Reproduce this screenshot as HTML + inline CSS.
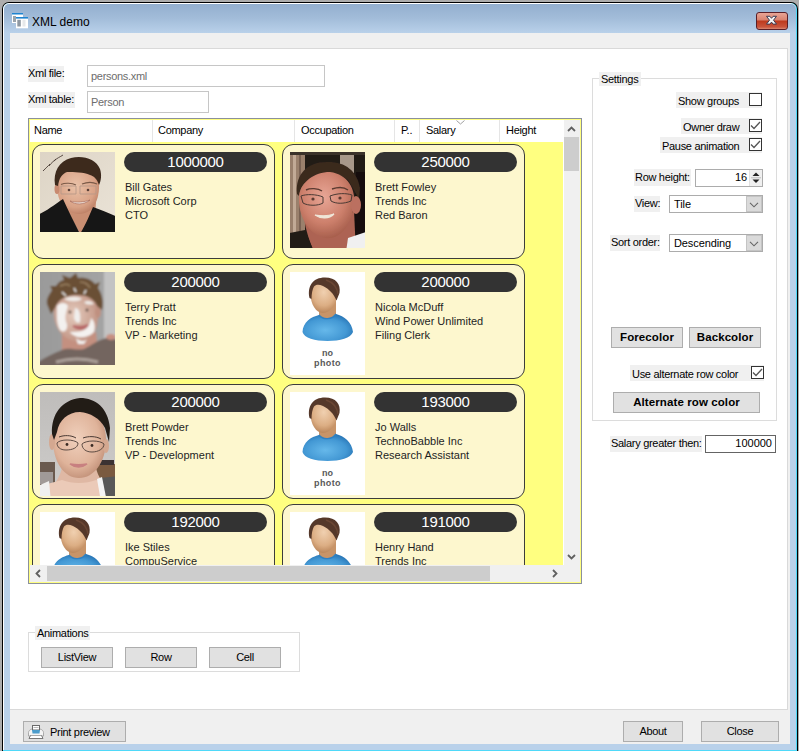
<!DOCTYPE html>
<html><head><meta charset="utf-8">
<style>
*{box-sizing:border-box}
body{margin:0;width:799px;height:751px;overflow:hidden;background:#adadad;position:relative;font-family:"Liberation Sans",sans-serif;font-size:11px;color:#000}
.a{position:absolute}
svg.a{display:block}
.t{position:absolute;white-space:nowrap;font-size:11px;line-height:13px;letter-spacing:-0.3px}
.lb{position:absolute;background:#f0f0f0}
.btn{position:absolute;background:#e1e1e1;border:1px solid #adadad;text-align:center;font-size:11px;line-height:19px;letter-spacing:-0.3px}
.bb{font-weight:bold;letter-spacing:0.1px;font-size:11.5px}
.chk{position:absolute;width:13px;height:13px;border:1px solid #333;background:#fff}
.card{position:absolute;width:243px;height:115px;border:1px solid #3c3c3c;border-radius:11px;background:#fdf7ce}
.pill{position:absolute;left:91px;top:7px;width:143px;height:20px;border-radius:10px;background:#333;color:#fff;text-align:center;font-size:15px;line-height:20px;letter-spacing:-0.3px}
.ct{position:absolute;left:92px;top:35px;font-size:11px;line-height:14px;color:#1e1e1e;white-space:nowrap}
.ph{position:absolute;left:7px;top:7px;width:75px;overflow:hidden}
.gb{position:absolute;border:1px solid #dcdcdc}
</style></head><body>
<div class="a" style="left:2px;top:2px;width:796px;height:760px;background:#000;border-radius:7px 7px 0 0"></div>
<div class="a" style="left:3px;top:3px;width:794px;height:760px;background:#4fd9f9;border-radius:6px 6px 0 0"></div>
<div class="a" style="left:3px;top:3px;width:793px;height:747px;background:#fff;border-radius:6px 6px 0 0"></div>
<div class="a" style="left:4px;top:4px;width:792px;height:746px;background:linear-gradient(#93afcf 0px,#a2bcd9 14px,#b9d1ea 29px,#b9d1ea 100%);border-radius:5px 5px 0 0"></div>
<svg class="a" style="left:12px;top:12px" width="17" height="17" viewBox="0 0 17 17">
 <rect x="0" y="1" width="11" height="10" fill="#fff"/>
 <rect x="0" y="1" width="11" height="1.5" fill="#1f84d0"/>
 <rect x="1" y="4" width="3" height="6" fill="#9ba4ac"/>
 <rect x="4" y="5" width="12" height="11.3" fill="#fff"/>
 <rect x="4" y="5" width="12" height="1.6" fill="#1f84d0"/>
 <rect x="5.3" y="7.8" width="3.5" height="6.7" fill="#8e98a2"/>
 <rect x="10.5" y="7.8" width="3" height="6.7" fill="#e6e8ea"/>
</svg>
<div class="t" style="left:32px;top:15px;font-size:12px;line-height:14px;letter-spacing:0;color:#000">XML demo</div>
<div class="a" style="left:756px;top:12px;width:32px;height:18px;border:1px solid #5a1f27;border-radius:3px;background:linear-gradient(#e9a596 0px,#d9836f 7px,#bd3a1e 8px,#c9553c 14px,#d98a75 100%)"></div>
<svg class="a" style="left:764px;top:14px" width="16" height="14" viewBox="0 0 16 14">
 <path d="M2.5 2.3 L5.9 2.3 L7.5 4.3 L9.1 2.3 L12.5 2.3 L9.5 6.2 L12.5 10.1 L9.1 10.1 L7.5 8.1 L5.9 10.1 L2.5 10.1 L5.5 6.2 Z" fill="#f6f6f6" stroke="#3a3a50" stroke-width="1" stroke-linejoin="round"/>
</svg>
<div class="a" style="left:10px;top:33px;width:780px;height:711px;background:#f0f0f0"></div>
<div class="a" style="left:10px;top:48px;width:778px;height:662px;background:#d9d9d9"></div>
<div class="a" style="left:10px;top:49px;width:777px;height:660px;background:#fff"></div>
<div class="lb" style="left:28px;top:66px;width:36px;height:16px"></div>
<div class="t" style="left:28px;top:67px">Xml file:</div>
<div class="lb" style="left:28px;top:92px;width:47px;height:16px"></div>
<div class="t" style="left:28px;top:93px">Xml table:</div>
<div class="a" style="left:87px;top:65px;width:238px;height:22px;border:1px solid #c6c6c6;background:#fff"></div>
<div class="t" style="left:91px;top:70px;color:#6d6d6d">persons.xml</div>
<div class="a" style="left:87px;top:91px;width:122px;height:22px;border:1px solid #c6c6c6;background:#fff"></div>
<div class="t" style="left:91px;top:96px;color:#6d6d6d">Person</div>
<div class="a" style="left:28px;top:118px;width:554px;height:466px;border:1px solid #8b909c;background:#ffff80;overflow:hidden">
<div class="a" style="left:1px;top:1px;width:534px;height:22px;background:#fff"></div>
<div class="a" style="left:123px;top:1px;width:1px;height:22px;background:#e5e5e5"></div>
<div class="a" style="left:265px;top:1px;width:1px;height:22px;background:#e5e5e5"></div>
<div class="a" style="left:365px;top:1px;width:1px;height:22px;background:#e5e5e5"></div>
<div class="a" style="left:390px;top:1px;width:1px;height:22px;background:#e5e5e5"></div>
<div class="a" style="left:470px;top:1px;width:1px;height:22px;background:#e5e5e5"></div>
<div class="t" style="left:5px;top:5px">Name</div>
<div class="t" style="left:129px;top:5px">Company</div>
<div class="t" style="left:272px;top:5px">Occupation</div>
<div class="t" style="left:372px;top:5px">P..</div>
<div class="t" style="left:397px;top:5px">Salary</div>
<div class="t" style="left:477px;top:5px">Height</div>
<svg class="a" style="left:427px;top:1px" width="9" height="5"><path d="M0.5 0.5 L4.5 4 L8.5 0.5" fill="none" stroke="#a0a0a0" stroke-width="1"/></svg>
<div class="a" style="left:1px;top:23px;width:533px;height:423px;overflow:hidden">
<div class="card" style="left:2px;top:2px"><svg class="a" style="left:7px;top:7px" width="75" height="80" viewBox="0 0 75 80"><defs><filter id="fb" x="-10%" y="-10%" width="120%" height="120%"><feGaussianBlur stdDeviation="0.6"/></filter><clipPath id="fbc"><rect width="75" height="80"/></clipPath></defs><g clip-path="url(#fbc)"><g filter="url(#fb)">
<defs>
<linearGradient id="bbg" x1="0" y1="0" x2="1" y2="1"><stop offset="0" stop-color="#dcd3c4"/><stop offset="1" stop-color="#ebe4d8"/></linearGradient>
<radialGradient id="bsk" cx="0.45" cy="0.4" r="0.65"><stop offset="0" stop-color="#eac2a8"/><stop offset="0.7" stop-color="#d9a286"/><stop offset="1" stop-color="#b87a60"/></radialGradient>
</defs>
<rect x="-5" y="-5" width="85" height="90" fill="url(#bbg)"/>
<path d="M20 44 L40 82 L54 82 L56 50 Z" fill="#c98e72"/>
<path d="M17 30 C16 48 24 61 39 62 C53 62 60 48 59 30 C58 20 50 15 38 15 C26 15 18 20 17 30 Z" fill="url(#bsk)"/>
<ellipse cx="17" cy="37" rx="2.5" ry="5" fill="#c88a70"/>
<path d="M15 33 C13 20 19 9 31 6 C43 3 56 7 60 17 C62 23 61 29 59 33 C57 27 54 24 50 23 C44 20 34 20 27 20 C22 22 19 26 18 34 Z" fill="#3d2b1f"/>
<path d="M21 32.5 C25 30.5 32 31 36 33 M42 32 C47 30 53 30 57 32" stroke="#7a5a48" stroke-width="1.1" fill="none"/>
<path d="M21 34 h15 v8 h-15z M40 34 h16 v8 h-16z" fill="none" stroke="#b89888" stroke-width="0.9"/>
<circle cx="29" cy="38" r="1.3" fill="#5a4038"/><circle cx="48" cy="38" r="1.3" fill="#5a4038"/>
<path d="M30 49 C35 53 44 53 50 48 C45 50 36 51 30 49 Z" fill="#f4e8e0" stroke="#a06050" stroke-width="0.6"/>
<path d="M-5 64 C4 61 14 53 23 47 C28 58 34 70 40 82 L-5 85 Z" fill="#161413"/>
<path d="M40 82 C46 72 50 62 53 55 C62 58 70 62 80 66 L80 85 L40 85 Z" fill="#161413"/>
<path d="M3 19 C6 16 8 14 10 12 M9 14 C12 10 14 9 16 7 M14 9 C17 6 20 5 23 3" stroke="#4a3c34" stroke-width="0.9" fill="none"/>
</g></g></svg><div class="pill">1000000</div><div class="ct">Bill Gates<br>Microsoft Corp<br>CTO</div></div>
<div class="card" style="left:252px;top:2px"><svg class="a" style="left:7px;top:7px" width="75" height="96" viewBox="0 0 75 96"><defs><filter id="ff" x="-10%" y="-10%" width="120%" height="120%"><feGaussianBlur stdDeviation="0.7"/></filter><clipPath id="ffc"><rect width="75" height="96"/></clipPath></defs><g clip-path="url(#ffc)"><g filter="url(#ff)">
<defs>
<radialGradient id="fsk" cx="0.45" cy="0.38" r="0.65"><stop offset="0" stop-color="#e8a696"/><stop offset="0.6" stop-color="#cd806c"/><stop offset="1" stop-color="#a45c4a"/></radialGradient>
</defs>
<rect x="-5" y="-5" width="85" height="106" fill="#241c17"/>
<rect x="-5" y="-5" width="20" height="106" fill="#9a806c"/>
<rect x="3" y="-5" width="3" height="106" fill="#c2aa96"/>
<rect x="9" y="-5" width="2" height="106" fill="#7a6252"/>
<rect x="-5" y="-5" width="85" height="8" fill="#3a322a"/>
<rect x="50" y="3" width="14" height="18" fill="#a8988a"/>
<path d="M66 20 L80 20 L80 100 L64 100 Z" fill="#14100d"/>
<path d="M14 66 L64 60 L66 100 L24 100 C20 90 16 80 14 66 Z" fill="#ad6452"/>
<path d="M7 42 C5 22 18 10 36 10 C54 9 67 18 70 36 L69 48 C65 40 62 34 58 28 C48 20 28 20 16 30 C13 33 10 36 9 44 Z" fill="#3a291f"/>
<path d="M9 44 C8 64 18 82 35 86 C51 88 62 72 64 52 C66 38 58 22 40 20 C24 20 11 30 9 44 Z" fill="url(#fsk)"/>
<ellipse cx="66" cy="53" rx="5" ry="9" fill="#bb7060"/>
<path d="M16 38 C20 36 28 36 32 39 M42 37 C48 35 54 35 58 38" stroke="#5a3a30" stroke-width="1.4" fill="none"/>
<path d="M11 44 C16 42 26 42 33 45 L33 51 C28 54 18 54 13 51 Z M40 44 C48 41 56 41 62 43 L61 49 C54 52 46 52 41 49 Z" fill="none" stroke="#4a3a34" stroke-width="1"/>
<circle cx="23" cy="47" r="1.6" fill="#5a3a32"/><circle cx="50" cy="46" r="1.6" fill="#5a3a32"/>
<path d="M25 63 C31 67 39 67 44 62 C39 64 31 64 25 63 Z" fill="#efe6d8" stroke="#efe6d8" stroke-width="1.2"/>
<path d="M58 86 C64 84 70 82 76 80 L76 100 L56 100 Z" fill="#f0f0f0"/>
<path d="M-5 100 L-5 82 L15 78 C18 86 21 92 24 100 Z" fill="#241c17"/>
</g></g></svg><div class="pill">250000</div><div class="ct">Brett Fowley<br>Trends Inc<br>Red Baron</div></div>
<div class="card" style="left:2px;top:122px"><svg class="a" style="left:7px;top:7px" width="75" height="93" viewBox="0 0 75 93"><defs><filter id="ft" x="-10%" y="-10%" width="120%" height="120%"><feGaussianBlur stdDeviation="0.85"/></filter><clipPath id="ftc"><rect width="75" height="93"/></clipPath></defs><g clip-path="url(#ftc)"><g filter="url(#ft)">
<defs>
<radialGradient id="tsk" cx="0.45" cy="0.45" r="0.6"><stop offset="0" stop-color="#e4cabc"/><stop offset="1" stop-color="#c09282"/></radialGradient>
<linearGradient id="tbg" x1="0" y1="0" x2="1" y2="0"><stop offset="0" stop-color="#999999"/><stop offset="1" stop-color="#a6a6a6"/></linearGradient>
</defs>
<rect x="-5" y="-5" width="85" height="103" fill="url(#tbg)"/>
<rect x="64" y="-5" width="16" height="72" fill="#c3c3c3"/>
<path d="M22 62 L56 60 L58 80 L22 82 Z" fill="#c49080"/>
<path d="M14 38 C13 56 24 70 40 70 C54 69 59 54 58 38 C57 26 48 20 36 20 C24 21 15 28 14 38 Z" fill="url(#tsk)"/>
<ellipse cx="58" cy="40" rx="3" ry="6" fill="#c09080"/>
<path d="M7 32 C6 26 10 22 12 18 L10 14 L16 14 C18 10 22 8 24 8 L22 3 L30 6 L36 1 L38 6 C46 5 52 8 55 12 L60 10 L58 16 C62 22 64 30 62 38 L57 34 C54 26 46 23 36 23 C26 23 18 28 15 36 L11 42 Z" fill="#6a5036"/>
<path d="M20 14 C24 12 28 12 30 14 M40 10 C44 10 48 12 50 16" stroke="#9a8060" stroke-width="1.5" fill="none"/>
<path d="M22 20 L26 24 M34 16 L36 20 M46 18 L44 22" stroke="#f0f0f0" stroke-width="1.5"/>
<path d="M17 34 C20 30 26 30 28 34 C26 40 24 46 27 52 C28 58 24 62 20 58 C16 52 17 42 17 34 Z" fill="#f3f1ef"/>
<path d="M24 27 C30 24 38 24 42 27 C38 30 30 30 24 27 Z" fill="#efece8"/>
<path d="M44 30 C48 28 52 29 54 32 C50 33 46 33 44 30 Z" fill="#efece8"/>
<path d="M35 36 C39 36 41 42 40 50 C38 52 35 50 34 46 Z" fill="#f0eeec"/>
<path d="M30 60 C34 66 46 68 54 60 C56 54 54 48 51 46 C50 52 48 56 44 58 C40 60 34 60 30 60 Z" fill="#f4f2f0"/>
<path d="M36 66 C40 70 46 70 48 66 L44 72 L38 72 Z" fill="#f2f0ee"/>
<circle cx="30" cy="40" r="1.5" fill="#5a4a42"/><circle cx="47" cy="38" r="1.5" fill="#5a4a42"/>
<path d="M33 54 C38 58 44 58 48 53 C44 55 38 55 33 54 Z" fill="#a85858" stroke="#b86868" stroke-width="2"/>
<path d="M-5 98 L-5 92 C4 86 12 82 22 78 C30 75 36 79 44 77 C52 73 58 68 66 66 C72 66 78 68 80 70 L80 98 Z" fill="#73655e"/>
<path d="M16 90 C30 86 44 86 58 90" stroke="#aca09a" stroke-width="3" fill="none"/>
<ellipse cx="71" cy="65" rx="5" ry="3" fill="#c89080"/>
</g></g></svg><div class="pill">200000</div><div class="ct">Terry Pratt<br>Trends Inc<br>VP - Marketing</div></div>
<div class="card" style="left:252px;top:122px"><svg class="a" style="left:7px;top:7px" width="75" height="103" viewBox="0 0 75 103"><rect width="75" height="103" fill="#fff"/>
<defs>
<radialGradient id="sh1" cx="0.45" cy="0.6" r="0.6"><stop offset="0" stop-color="#66b8ea"/><stop offset="0.7" stop-color="#4398d4"/><stop offset="1" stop-color="#2a78b8"/></radialGradient>
<radialGradient id="fa1" cx="0.5" cy="0.35" r="0.7"><stop offset="0" stop-color="#f0d0b0"/><stop offset="0.6" stop-color="#dcae84"/><stop offset="1" stop-color="#b47e52"/></radialGradient>
</defs>
<path d="M29 35 L46 28 L46 48 L29 48 Z" fill="#c89468"/>
<path d="M12.5 60 C13 50 21 45 29 43 C33 48 42 48 46 42 C54 44 62 50 63 60 C61 66 50 69 37.5 69 C25 69 14 66 12.5 60 Z" fill="url(#sh1)"/>
<path d="M29 43 C33 48 42 48 46 42" stroke="#2e80c2" stroke-width="1.4" fill="none"/>
<path d="M20.5 22 C20.5 32 26 41 33 41 C40 41 47 32 47 22 C47 14 42 9 34 9 C26 9 20.5 14 20.5 22 Z" fill="url(#fa1)"/>
<path d="M19.5 26 C17 14 23 5.5 35 5.5 C46 5.5 51 12 49.5 21 L46.5 28.5 C44 22 39 17 33 14 C29 12.3 26 12.3 24 14.5 C22.5 17 21.5 22 21.5 27 Z" fill="#55382a"/>
<path d="M36 8 C42 10 47 15 48 22" stroke="#6a4634" stroke-width="1.5" fill="none"/>
<text x="37.5" y="84" text-anchor="middle" font-family="Liberation Sans" font-weight="bold" font-size="9" fill="#595959">no</text>
<text x="37.5" y="94" text-anchor="middle" font-family="Liberation Sans" font-weight="bold" font-size="9" fill="#595959" letter-spacing="0.4">photo</text>
</svg><div class="pill">200000</div><div class="ct">Nicola McDuff<br>Wind Power Unlimited<br>Filing Clerk</div></div>
<div class="card" style="left:2px;top:242px"><svg class="a" style="left:7px;top:7px" width="75" height="104" viewBox="0 0 75 104"><defs><filter id="fp" x="-10%" y="-10%" width="120%" height="120%"><feGaussianBlur stdDeviation="0.6"/></filter><clipPath id="fpc"><rect width="75" height="104"/></clipPath></defs><g clip-path="url(#fpc)"><g filter="url(#fp)">
<defs>
<radialGradient id="psk" cx="0.45" cy="0.42" r="0.6"><stop offset="0" stop-color="#f0d0bc"/><stop offset="0.7" stop-color="#dfb39a"/><stop offset="1" stop-color="#c3927a"/></radialGradient>
<linearGradient id="pbg" x1="0" y1="0" x2="0" y2="1"><stop offset="0" stop-color="#bebcba"/><stop offset="1" stop-color="#cfcdcb"/></linearGradient>
</defs>
<rect x="-5" y="-5" width="85" height="115" fill="url(#pbg)"/>
<rect x="-5" y="70" width="20" height="24" fill="#6a5a50"/>
<rect x="-5" y="80" width="18" height="12" fill="#a09a98"/>
<rect x="52" y="72" width="28" height="18" fill="#7a5a40"/>
<rect x="56" y="68" width="18" height="5" fill="#3a3230"/>
<path d="M22 76 L56 76 C58 84 62 90 66 94 L12 96 C16 90 20 84 22 76 Z" fill="#dfb8a4"/>
<path d="M-5 110 L-5 96 C6 92 14 90 22 88 C32 92 46 92 56 88 C62 90 68 94 72 94 L72 110 Z" fill="#ebcab8"/>
<path d="M0 93 L9 89 L11 110 L0 110 Z" fill="#f0f0f0"/>
<path d="M60 86 L80 84 L80 110 L64 110 Z" fill="#585858"/>
<path d="M57 87 L62 85 L67 110 L61 110 Z" fill="#f4f4f4"/>
<path d="M13 48 C13 70 24 86 39 86 C54 86 66 70 66 48 C66 30 56 18 40 18 C24 18 13 30 13 48 Z" fill="url(#psk)"/>
<ellipse cx="12" cy="50" rx="3" ry="8" fill="#d4a890"/>
<ellipse cx="66" cy="54" rx="3" ry="7" fill="#d4a890"/>
<path d="M12 42 C11 22 22 8 40 6 C56 6 68 16 70 36 L69 50 L65 36 C60 26 50 21 40 20 C28 20 19 28 17 40 L14 48 Z" fill="#241c19"/>
<path d="M19 45 C24 43 31 43 36 46 M43 46 C48 44 56 44 61 47" stroke="#4a3a34" stroke-width="1" fill="none"/>
<path d="M17 51 C20 47 34 47 38 51 C38 56 32 58 26 58 C20 58 17 55 17 51 Z M42 52 C46 48 60 48 64 52 C64 57 58 60 52 60 C46 60 42 57 42 52 Z" fill="none" stroke="#4e3e38" stroke-width="0.9"/>
<circle cx="27" cy="52.5" r="1.4" fill="#3a2a24"/><circle cx="52" cy="53.5" r="1.4" fill="#3a2a24"/>
<path d="M30 72 C35 76 42 76 47 72 C42 73 35 73 30 72 Z" fill="#c88080" stroke="#c88080" stroke-width="1.6"/>
</g></g></svg><div class="pill">200000</div><div class="ct">Brett Powder<br>Trends Inc<br>VP - Development</div></div>
<div class="card" style="left:252px;top:242px"><svg class="a" style="left:7px;top:7px" width="75" height="103" viewBox="0 0 75 103"><rect width="75" height="103" fill="#fff"/>
<defs>
<radialGradient id="sh2" cx="0.45" cy="0.6" r="0.6"><stop offset="0" stop-color="#66b8ea"/><stop offset="0.7" stop-color="#4398d4"/><stop offset="1" stop-color="#2a78b8"/></radialGradient>
<radialGradient id="fa2" cx="0.5" cy="0.35" r="0.7"><stop offset="0" stop-color="#f0d0b0"/><stop offset="0.6" stop-color="#dcae84"/><stop offset="1" stop-color="#b47e52"/></radialGradient>
</defs>
<path d="M29 35 L46 28 L46 48 L29 48 Z" fill="#c89468"/>
<path d="M12.5 60 C13 50 21 45 29 43 C33 48 42 48 46 42 C54 44 62 50 63 60 C61 66 50 69 37.5 69 C25 69 14 66 12.5 60 Z" fill="url(#sh2)"/>
<path d="M29 43 C33 48 42 48 46 42" stroke="#2e80c2" stroke-width="1.4" fill="none"/>
<path d="M20.5 22 C20.5 32 26 41 33 41 C40 41 47 32 47 22 C47 14 42 9 34 9 C26 9 20.5 14 20.5 22 Z" fill="url(#fa2)"/>
<path d="M19.5 26 C17 14 23 5.5 35 5.5 C46 5.5 51 12 49.5 21 L46.5 28.5 C44 22 39 17 33 14 C29 12.3 26 12.3 24 14.5 C22.5 17 21.5 22 21.5 27 Z" fill="#55382a"/>
<path d="M36 8 C42 10 47 15 48 22" stroke="#6a4634" stroke-width="1.5" fill="none"/>
<text x="37.5" y="84" text-anchor="middle" font-family="Liberation Sans" font-weight="bold" font-size="9" fill="#595959">no</text>
<text x="37.5" y="94" text-anchor="middle" font-family="Liberation Sans" font-weight="bold" font-size="9" fill="#595959" letter-spacing="0.4">photo</text>
</svg><div class="pill">193000</div><div class="ct">Jo Walls<br>TechnoBabble Inc<br>Research Assistant</div></div>
<div class="card" style="left:2px;top:362px"><svg class="a" style="left:7px;top:7px" width="75" height="103" viewBox="0 0 75 103"><rect width="75" height="103" fill="#fff"/>
<defs>
<radialGradient id="sh3" cx="0.45" cy="0.6" r="0.6"><stop offset="0" stop-color="#66b8ea"/><stop offset="0.7" stop-color="#4398d4"/><stop offset="1" stop-color="#2a78b8"/></radialGradient>
<radialGradient id="fa3" cx="0.5" cy="0.35" r="0.7"><stop offset="0" stop-color="#f0d0b0"/><stop offset="0.6" stop-color="#dcae84"/><stop offset="1" stop-color="#b47e52"/></radialGradient>
</defs>
<path d="M29 35 L46 28 L46 48 L29 48 Z" fill="#c89468"/>
<path d="M12.5 60 C13 50 21 45 29 43 C33 48 42 48 46 42 C54 44 62 50 63 60 C61 66 50 69 37.5 69 C25 69 14 66 12.5 60 Z" fill="url(#sh3)"/>
<path d="M29 43 C33 48 42 48 46 42" stroke="#2e80c2" stroke-width="1.4" fill="none"/>
<path d="M20.5 22 C20.5 32 26 41 33 41 C40 41 47 32 47 22 C47 14 42 9 34 9 C26 9 20.5 14 20.5 22 Z" fill="url(#fa3)"/>
<path d="M19.5 26 C17 14 23 5.5 35 5.5 C46 5.5 51 12 49.5 21 L46.5 28.5 C44 22 39 17 33 14 C29 12.3 26 12.3 24 14.5 C22.5 17 21.5 22 21.5 27 Z" fill="#55382a"/>
<path d="M36 8 C42 10 47 15 48 22" stroke="#6a4634" stroke-width="1.5" fill="none"/>
<text x="37.5" y="84" text-anchor="middle" font-family="Liberation Sans" font-weight="bold" font-size="9" fill="#595959">no</text>
<text x="37.5" y="94" text-anchor="middle" font-family="Liberation Sans" font-weight="bold" font-size="9" fill="#595959" letter-spacing="0.4">photo</text>
</svg><div class="pill">192000</div><div class="ct">Ike Stiles<br>CompuService<br>Developer</div></div>
<div class="card" style="left:252px;top:362px"><svg class="a" style="left:7px;top:7px" width="75" height="103" viewBox="0 0 75 103"><rect width="75" height="103" fill="#fff"/>
<defs>
<radialGradient id="sh4" cx="0.45" cy="0.6" r="0.6"><stop offset="0" stop-color="#66b8ea"/><stop offset="0.7" stop-color="#4398d4"/><stop offset="1" stop-color="#2a78b8"/></radialGradient>
<radialGradient id="fa4" cx="0.5" cy="0.35" r="0.7"><stop offset="0" stop-color="#f0d0b0"/><stop offset="0.6" stop-color="#dcae84"/><stop offset="1" stop-color="#b47e52"/></radialGradient>
</defs>
<path d="M29 35 L46 28 L46 48 L29 48 Z" fill="#c89468"/>
<path d="M12.5 60 C13 50 21 45 29 43 C33 48 42 48 46 42 C54 44 62 50 63 60 C61 66 50 69 37.5 69 C25 69 14 66 12.5 60 Z" fill="url(#sh4)"/>
<path d="M29 43 C33 48 42 48 46 42" stroke="#2e80c2" stroke-width="1.4" fill="none"/>
<path d="M20.5 22 C20.5 32 26 41 33 41 C40 41 47 32 47 22 C47 14 42 9 34 9 C26 9 20.5 14 20.5 22 Z" fill="url(#fa4)"/>
<path d="M19.5 26 C17 14 23 5.5 35 5.5 C46 5.5 51 12 49.5 21 L46.5 28.5 C44 22 39 17 33 14 C29 12.3 26 12.3 24 14.5 C22.5 17 21.5 22 21.5 27 Z" fill="#55382a"/>
<path d="M36 8 C42 10 47 15 48 22" stroke="#6a4634" stroke-width="1.5" fill="none"/>
<text x="37.5" y="84" text-anchor="middle" font-family="Liberation Sans" font-weight="bold" font-size="9" fill="#595959">no</text>
<text x="37.5" y="94" text-anchor="middle" font-family="Liberation Sans" font-weight="bold" font-size="9" fill="#595959" letter-spacing="0.4">photo</text>
</svg><div class="pill">191000</div><div class="ct">Henry Hand<br>Trends Inc<br>Programmer</div></div>
</div>
<div class="a" style="left:534px;top:1px;width:1px;height:445px;background:#fff"></div>
<div class="a" style="left:535px;top:1px;width:16px;height:445px;background:#f0f0f0"></div>
<div class="a" style="left:535px;top:18px;width:15px;height:34px;background:#cdcdcd"></div>
<svg class="a" style="left:538px;top:6px" width="9" height="8"><path d="M1 6 L4.5 2.5 L8 6" fill="none" stroke="#606060" stroke-width="1.8"/></svg>
<svg class="a" style="left:538px;top:434px" width="9" height="8"><path d="M1 2 L4.5 5.5 L8 2" fill="none" stroke="#606060" stroke-width="1.8"/></svg>
<div class="a" style="left:1px;top:446px;width:550px;height:17px;background:#f0f0f0"></div>
<div class="a" style="left:18px;top:447px;width:443px;height:15px;background:#cdcdcd"></div>
<svg class="a" style="left:5px;top:450px" width="8" height="9"><path d="M6 1 L2.5 4.5 L6 8" fill="none" stroke="#606060" stroke-width="1.8"/></svg>
<svg class="a" style="left:522px;top:450px" width="8" height="9"><path d="M2 1 L5.5 4.5 L2 8" fill="none" stroke="#606060" stroke-width="1.8"/></svg>
</div>
<div class="gb" style="left:592px;top:78px;width:185px;height:343px"></div>
<div class="lb" style="left:599px;top:72px;width:42px;height:14px"></div>
<div class="t" style="left:601px;top:73px">Settings</div>
<div class="lb" style="left:676px;top:92px;width:86px;height:16px"></div>
<div class="t" style="left:678px;top:95px">Show groups</div>
<div class="chk" style="left:749px;top:93px"></div>
<div class="lb" style="left:681px;top:118px;width:81px;height:16px"></div>
<div class="t" style="left:683px;top:121px">Owner draw</div>
<div class="chk" style="left:749px;top:119px"></div>
<svg class="a" style="left:749px;top:119px" width="13" height="13"><path d="M2 6.5 L5 9.5 L11 3" fill="none" stroke="#555" stroke-width="1.3"/></svg>
<div class="lb" style="left:660px;top:137px;width:102px;height:16px"></div>
<div class="t" style="left:662px;top:140px">Pause animation</div>
<div class="chk" style="left:749px;top:138px"></div>
<svg class="a" style="left:749px;top:138px" width="13" height="13"><path d="M2 6.5 L5 9.5 L11 3" fill="none" stroke="#555" stroke-width="1.3"/></svg>
<div class="lb" style="left:634px;top:169px;width:57px;height:17px"></div>
<div class="t" style="left:635px;top:171px">Row height:</div>
<div class="a" style="left:695px;top:169px;width:68px;height:18px;border:1px solid #acacac;background:#fff"></div>
<div class="t" style="left:735px;top:171px;letter-spacing:0">16</div>
<div class="a" style="left:749px;top:170px;width:13px;height:16px;background:#f0f0f0;border-left:1px solid #e0e0e0"></div>
<svg class="a" style="left:751px;top:171px" width="10" height="14"><path d="M1.5 5 L5 1.5 L8.5 5 Z" fill="#222"/><path d="M1.5 8.5 L5 12 L8.5 8.5 Z" fill="#222"/><path d="M0 6.8 H10" stroke="#bbb" stroke-width="1"/></svg>
<div class="lb" style="left:634px;top:196px;width:26px;height:16px"></div>
<div class="t" style="left:635px;top:197px">View:</div>
<div class="a" style="left:669px;top:195px;width:94px;height:18px;border:1px solid #acacac;background:#fff"></div>
<div class="t" style="left:674px;top:198px;letter-spacing:-0.1px">Tile</div>
<div class="a" style="left:746px;top:196px;width:16px;height:16px;background:#dadada;border:1px solid #c4c4c4"></div>
<svg class="a" style="left:749px;top:202px" width="10" height="6"><path d="M1 0.8 L5 4.8 L9 0.8" fill="none" stroke="#666" stroke-width="1.1"/></svg>
<div class="lb" style="left:610px;top:235px;width:50px;height:16px"></div>
<div class="t" style="left:611px;top:236px">Sort order:</div>
<div class="a" style="left:669px;top:234px;width:94px;height:18px;border:1px solid #acacac;background:#fff"></div>
<div class="t" style="left:674px;top:237px;letter-spacing:-0.1px">Descending</div>
<div class="a" style="left:746px;top:235px;width:16px;height:16px;background:#dadada;border:1px solid #c4c4c4"></div>
<svg class="a" style="left:749px;top:241px" width="10" height="6"><path d="M1 0.8 L5 4.8 L9 0.8" fill="none" stroke="#666" stroke-width="1.1"/></svg>
<div class="btn bb" style="left:611px;top:327px;width:72px;height:21px">Forecolor</div>
<div class="btn bb" style="left:689px;top:327px;width:72px;height:21px">Backcolor</div>
<div class="lb" style="left:630px;top:365px;width:134px;height:16px"></div>
<div class="t" style="left:632px;top:368px">Use alternate row color</div>
<div class="chk" style="left:751px;top:366px"></div>
<svg class="a" style="left:751px;top:366px" width="13" height="13"><path d="M2 6.5 L5 9.5 L11 3" fill="none" stroke="#555" stroke-width="1.3"/></svg>
<div class="btn bb" style="left:613px;top:392px;width:147px;height:21px">Alternate row color</div>
<div class="lb" style="left:610px;top:436px;width:92px;height:16px"></div>
<div class="t" style="left:611px;top:437px">Salary greater then:</div>
<div class="a" style="left:705px;top:435px;width:71px;height:18px;border:1px solid #646464;background:#fff"></div>
<div class="t" style="left:705px;top:437px;width:67px;text-align:right;letter-spacing:0">100000</div>
<div class="gb" style="left:28px;top:632px;width:272px;height:40px"></div>
<div class="lb" style="left:35px;top:626px;width:55px;height:14px"></div>
<div class="t" style="left:37px;top:627px">Animations</div>
<div class="btn" style="left:41px;top:647px;width:72px;height:21px">ListView</div>
<div class="btn" style="left:125px;top:647px;width:72px;height:21px">Row</div>
<div class="btn" style="left:209px;top:647px;width:72px;height:21px">Cell</div>
<div class="btn" style="left:23px;top:721px;width:103px;height:21px"></div>
<div class="t" style="left:50px;top:726px">Print preview</div>
<svg class="a" style="left:27px;top:724px" width="18" height="17" viewBox="0 0 18 17">
<path d="M1.5 12 L1.5 8.5 C1.5 7 3 5.5 5 5 L13 5 C15 5.5 16.5 7 16.5 8.5 L16.5 12 Z" fill="#f4f4f4" stroke="#9a9a9a" stroke-width="0.8"/>
<rect x="5.5" y="1.5" width="7" height="4.5" fill="#fff" stroke="#6a6a6a" stroke-width="1"/>
<path d="M6.5 3.5 H11.5" stroke="#aaa" stroke-width="0.8"/>
<path d="M5 6 L13 6 L12.5 9.5 L5.5 9.5 Z" fill="#4c9ccb"/>
<path d="M3.5 11.5 H14.5" stroke="#555" stroke-width="1"/>
<path d="M3.5 11.5 L2 14.5 L16 14.5 L14.5 11.5" fill="#fff" stroke="#777" stroke-width="1"/>
</svg>
<div class="btn" style="left:623px;top:721px;width:60px;height:21px">About</div>
<div class="btn" style="left:701px;top:721px;width:78px;height:21px">Close</div>
</body></html>
